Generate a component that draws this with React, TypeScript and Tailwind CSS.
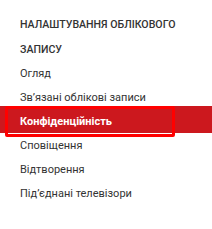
import React from "react";

const items = [
  "Огляд",
  "Зв’язані облікові записи",
  "Конфіденційність",
  "Сповіщення",
  "Відтворення",
  "Під’єднані телевізори",
];

export default function App() {
  return (
    <div
      className="w-[212px] h-[229px] bg-white pt-[12px] overflow-hidden"
      style={{ fontFamily: "Roboto, 'Noto Sans', sans-serif" }}
    >
      <div className="pl-[20px] pr-[14px] text-[10.6px] leading-[25px] font-medium uppercase text-[#333333]">
        Налаштування облікового запису
      </div>
      <div className="flex flex-col">
        {items.map((it) =>
          it === "Конфіденційність" ? (
            <div
              key={it}
              className="relative -mt-[4px] mb-[1px] h-[27px] pt-[4px] bg-[#cc181e] px-[20px] text-[11px] leading-[23px] font-bold text-white"
            >
              {it}
              <div className="absolute left-[5px] top-0 w-[170px] h-[31px] border-[3px] border-[#ff0000] rounded-[2px]" />
            </div>
          ) : (
            <div
              key={it}
              className="h-[24px] px-[20px] text-[11px] leading-[24px] text-[#333333]"
            >
              {it}
            </div>
          )
        )}
      </div>
    </div>
  );
}
